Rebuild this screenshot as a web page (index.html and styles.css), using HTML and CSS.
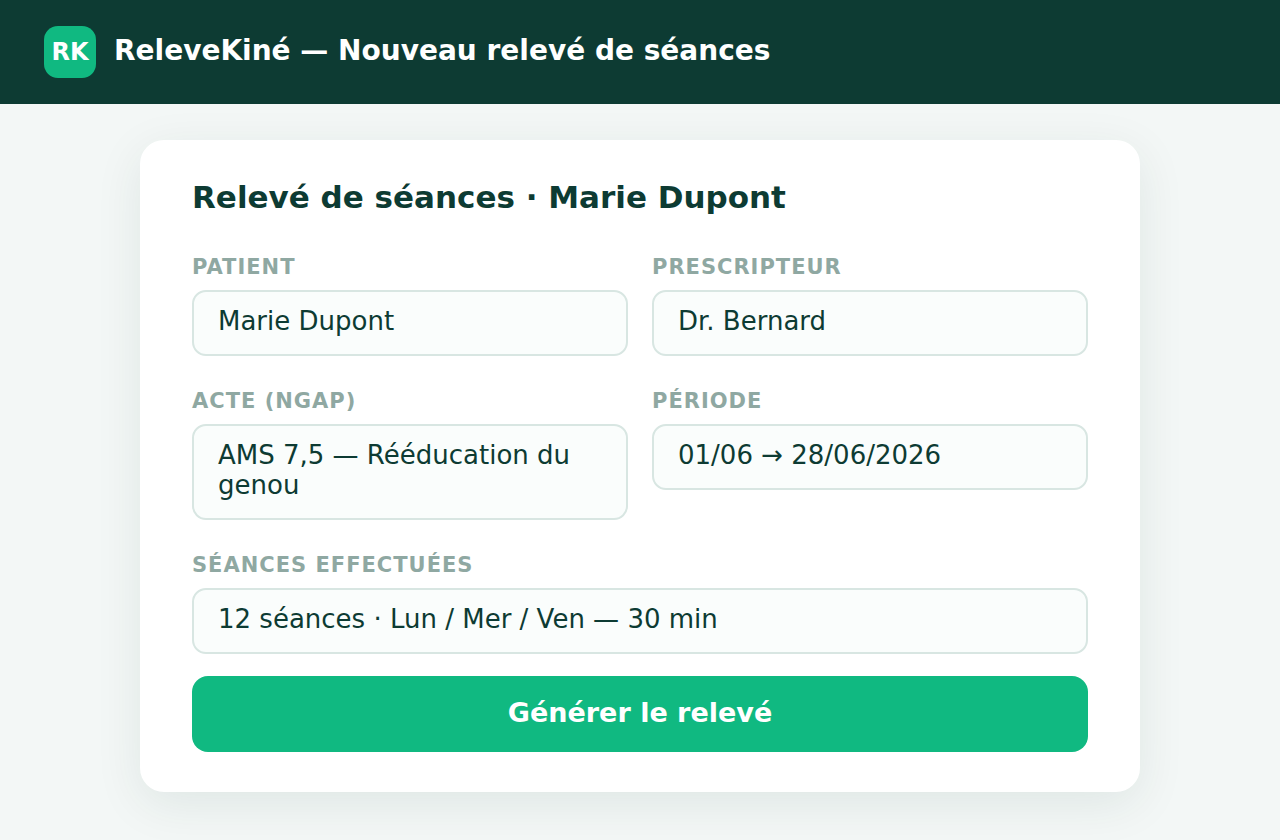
FILE: index.html
```html
<!DOCTYPE html>
<html lang="fr">
<head>
<meta charset="utf-8">
<title>ReleveKiné</title>
<link rel="stylesheet" href="styles.css">
</head>
<body>
<header class="topbar">
  <div class="logo">RK</div>
  <div class="app-title">ReleveKiné — Nouveau relevé de séances</div>
</header>
<main class="page">
  <section class="card">
    <h1 class="card-title">Relevé de séances · Marie Dupont</h1>
    <div class="grid">
      <div class="field"><div class="label">Patient</div><div class="input">Marie Dupont</div></div>
      <div class="field"><div class="label">Prescripteur</div><div class="input">Dr. Bernard</div></div>
      <div class="field"><div class="label">Acte (NGAP)</div><div class="input">AMS 7,5 — Rééducation du genou</div></div>
      <div class="field"><div class="label">Période</div><div class="input">01/06 → 28/06/2026</div></div>
      <div class="field wide"><div class="label">Séances effectuées</div><div class="input">12 séances · Lun / Mer / Ven — 30 min</div></div>
    </div>
    <button class="submit">Générer le relevé</button>
  </section>
</main>
</body>
</html>
```
FILE: styles.css
```css
* { box-sizing: border-box; }
html, body { margin: 0; height: 100%; }
body {
  background: #f3f7f6;
  font-family: "DejaVu Sans", sans-serif;
  color: #0d3b33;
  overflow: hidden;
}
.topbar {
  height: 104px;
  background: #0d3b33;
  display: flex;
  align-items: center;
  gap: 18px;
  padding: 0 44px 4px;
}
.logo {
  width: 52px;
  height: 52px;
  margin-top: 4px;
  border-radius: 14px;
  background: #10b981;
  color: #fff;
  font-weight: 700;
  font-size: 24px;
  display: flex;
  align-items: center;
  justify-content: center;
}
.app-title { color: #fff; font-weight: 700; font-size: 28px; }
.page { display: flex; justify-content: center; padding-top: 36px; }
.card {
  width: 1000px;
  background: #fff;
  border-radius: 24px;
  padding: 36px 52px 40px;
  box-shadow: 0 12px 48px rgba(13, 59, 51, 0.085);
}
.card-title { margin: 0 0 37px; font-size: 31px; font-weight: 700; line-height: 42px; color: #0d3b33; }
.grid { display: grid; grid-template-columns: 1fr 1fr; gap: 33px 24px; align-items: start; }
.wide { grid-column: 1 / -1; }
.label {
  font-size: 21px;
  font-weight: 700;
  letter-spacing: 1px;
  text-transform: uppercase;
  color: #8fa8a2;
  line-height: 24px;
  margin-bottom: 11px;
}
.input {
  border: 2px solid #d8e6e2;
  border-radius: 14px;
  background: #fafdfc;
  padding: 14px 24px 18px;
  font-size: 26px;
  line-height: 30px;
  color: #0d3b33;
}
.submit {
  display: block;
  width: 100%;
  height: 76px;
  margin-top: 22px;
  padding: 0 0 4px;
  border: 0;
  border-radius: 16px;
  background: #10b981;
  color: #fff;
  font: 700 27px "DejaVu Sans", sans-serif;
}
```
